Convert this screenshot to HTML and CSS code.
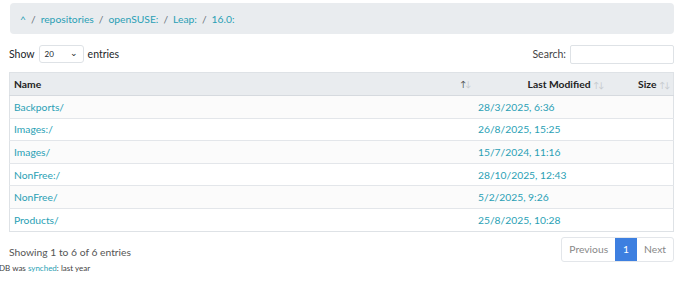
FILE: index.html
```html
<!DOCTYPE html>
<html lang="en">
<head>
  <meta charset="UTF-8" />
  <title>Index of /repositories/openSUSE:/Leap:/16.0:</title>
  <link rel="stylesheet" href="styles.css">
</head>
<body>
  <div class="container">
    <!-- Breadcrumb -->
    <nav class="crumbs">
      <a href="#">^</a><span class="sep">/</span>
      <a href="#">repositories</a><span class="sep">/</span>
      <a href="#">openSUSE:</a><span class="sep">/</span>
      <a href="#">Leap:</a><span class="sep">/</span>
      <a href="#">16.0:</a>
    </nav>

    <!-- Controls -->
    <div class="controls">
      <label class="length">Show
        <span class="select">20 <span class="caret">&#8964;</span></span>
        entries</label>
      <label class="search">Search: <span class="search-box"></span></label>
    </div>

    <table class="listing">
      <thead>
        <tr>
          <th class="col-name">Name <span class="sort asc"><b>&#8593;</b>&#8595;</span></th>
          <th class="col-date">Last Modified <span class="sort"><b>&#8593;</b>&#8595;</span></th>
          <th class="col-size">Size <span class="sort"><b>&#8593;</b>&#8595;</span></th>
        </tr>
      </thead>
      <tbody>
        <tr><td><a href="#">Backports/</a></td><td><a href="#">28/3/2025, 6:36</a></td><td></td></tr>
        <tr><td><a href="#">Images:/</a></td><td><a href="#">26/8/2025, 15:25</a></td><td></td></tr>
        <tr><td><a href="#">Images/</a></td><td><a href="#">15/7/2024, 11:16</a></td><td></td></tr>
        <tr><td><a href="#">NonFree:/</a></td><td><a href="#">28/10/2025, 12:43</a></td><td></td></tr>
        <tr><td><a href="#">NonFree/</a></td><td><a href="#">5/2/2025, 9:26</a></td><td></td></tr>
        <tr><td><a href="#">Products/</a></td><td><a href="#">25/8/2025, 10:28</a></td><td></td></tr>
      </tbody>
    </table>

    <div class="footer-row">
      <div class="info">Showing 1 to 6 of 6 entries</div>
      <div class="pager">
        <a href="#" class="page disabled">Previous</a>
        <a href="#" class="page current">1</a>
        <a href="#" class="page disabled">Next</a>
      </div>
    </div>
  </div>

  <div class="synched">DB was <a href="#">synched</a>: last year</div>
</body>
</html>
```

FILE: styles.css
```css
body {
  margin: 0;
  font-family: "Lato", "Open Sans", sans-serif;
  font-size: 10.5px;
  color: #212529;
  background: #fff;
}

a {
  color: #2a9fb5;
  text-decoration: none;
}

.container {
  width: 665px;
  padding: 3px 0 0 9px;
}

.crumbs {
  background: #e9ecef;
  border-radius: 4px;
  height: 31px;
  margin-left: 1px;
  padding: 0 10px;
  display: flex;
  align-items: center;
  font-size: 10.3px;
}

.crumbs .sep {
  color: #6c757d;
  padding: 0 5px;
}

.controls {
  display: flex;
  justify-content: space-between;
  align-items: center;
  height: 20px;
  margin-top: 10px;
}

.length {
  display: flex;
  align-items: center;
  gap: 4px;
  font-size: 10.5px;
}

.select {
  width: 45px;
  height: 18px;
  border: 1px solid #dee2e6;
  border-radius: 3px;
  box-sizing: border-box;
  font-size: 8px;
  padding-left: 5px;
  display: flex;
  align-items: center;
  justify-content: space-between;
}

.caret {
  font-size: 9px;
  padding-right: 5px;
  margin-top: -3px;
}

.search {
  display: flex;
  align-items: center;
  gap: 4px;
  color: #444;
}

.search-box {
  width: 104px;
  height: 19px;
  border: 1px solid #dee2e6;
  border-radius: 2px;
  box-sizing: border-box;
}

.listing {
  width: 100%;
  margin-top: 8px;
  border-collapse: collapse;
  border: 1px solid #dee2e6;
  font-size: 10.3px;
}

.listing th {
  background: #e9ecef;
  height: 22px;
  padding: 0 4px;
  font-weight: bold;
  color: #222;
  border-bottom: 1px solid #d6dadf;
}

.listing td {
  height: 21.6px;
  padding: 0 4px;
  border-top: 1px solid #e3e6ea;
}

.listing tbody tr:nth-child(odd) {
  background: #fbfbfb;
}

.col-name {
  text-align: left;
  position: relative;
}

.col-name .sort {
  position: absolute;
  right: 4px;
  top: 6px;
}

.col-date {
  width: 125px;
  text-align: right;
}

.col-size {
  width: 58px;
  text-align: right;
}

.sort {
  font-size: 8px;
  font-weight: normal;
  color: #c4c8cc;
  letter-spacing: -1px;
}

.sort b {
  font-weight: normal;
}

.sort.asc b {
  color: #444;
}

.footer-row {
  display: flex;
  justify-content: space-between;
  align-items: center;
  margin-top: 5px;
}

.info {
  color: #555;
  font-size: 10.3px;
  padding-top: 5px;
}

.pager {
  display: flex;
  border: 1px solid #e3e6ea;
  border-radius: 3px;
  height: 23px;
}

.page {
  display: flex;
  align-items: center;
  padding: 0 7px;
  color: #888;
  font-size: 10.3px;
}

.page.current {
  background: #3d7fe0;
  color: #fff;
  padding: 0 8px;
}

.synched {
  font-size: 8px;
  color: #444;
  margin-top: 1px;
  margin-left: -1px;
}
```
